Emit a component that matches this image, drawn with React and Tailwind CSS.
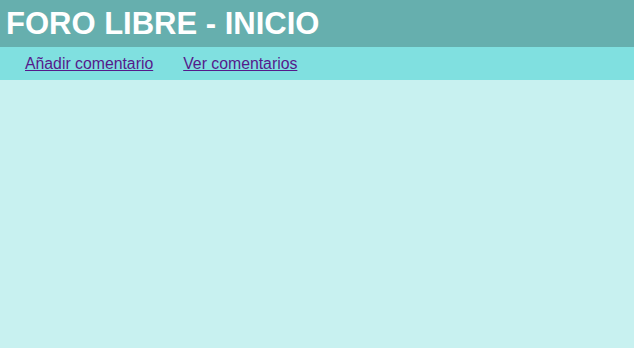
export default function App() {
  return (
    <div className="min-h-[348px] bg-[#c8f1f0] font-['Liberation_Sans',Arial,sans-serif]">
      <header className="h-[47px] bg-[#66afae] px-[6px] flex items-center">
        <h1 className="text-[31px] font-bold text-white leading-none m-0">FORO LIBRE - INICIO</h1>
      </header>
      <nav className="h-[33px] bg-[#80e0e0] flex items-center gap-[30px] pl-[25px] pt-[1px]">
        <a href="#" className="text-[15.8px] text-[#551a8b] underline">Añadir comentario</a>
        <a href="#" className="text-[15.8px] text-[#551a8b] underline">Ver comentarios</a>
      </nav>
    </div>
  );
}
